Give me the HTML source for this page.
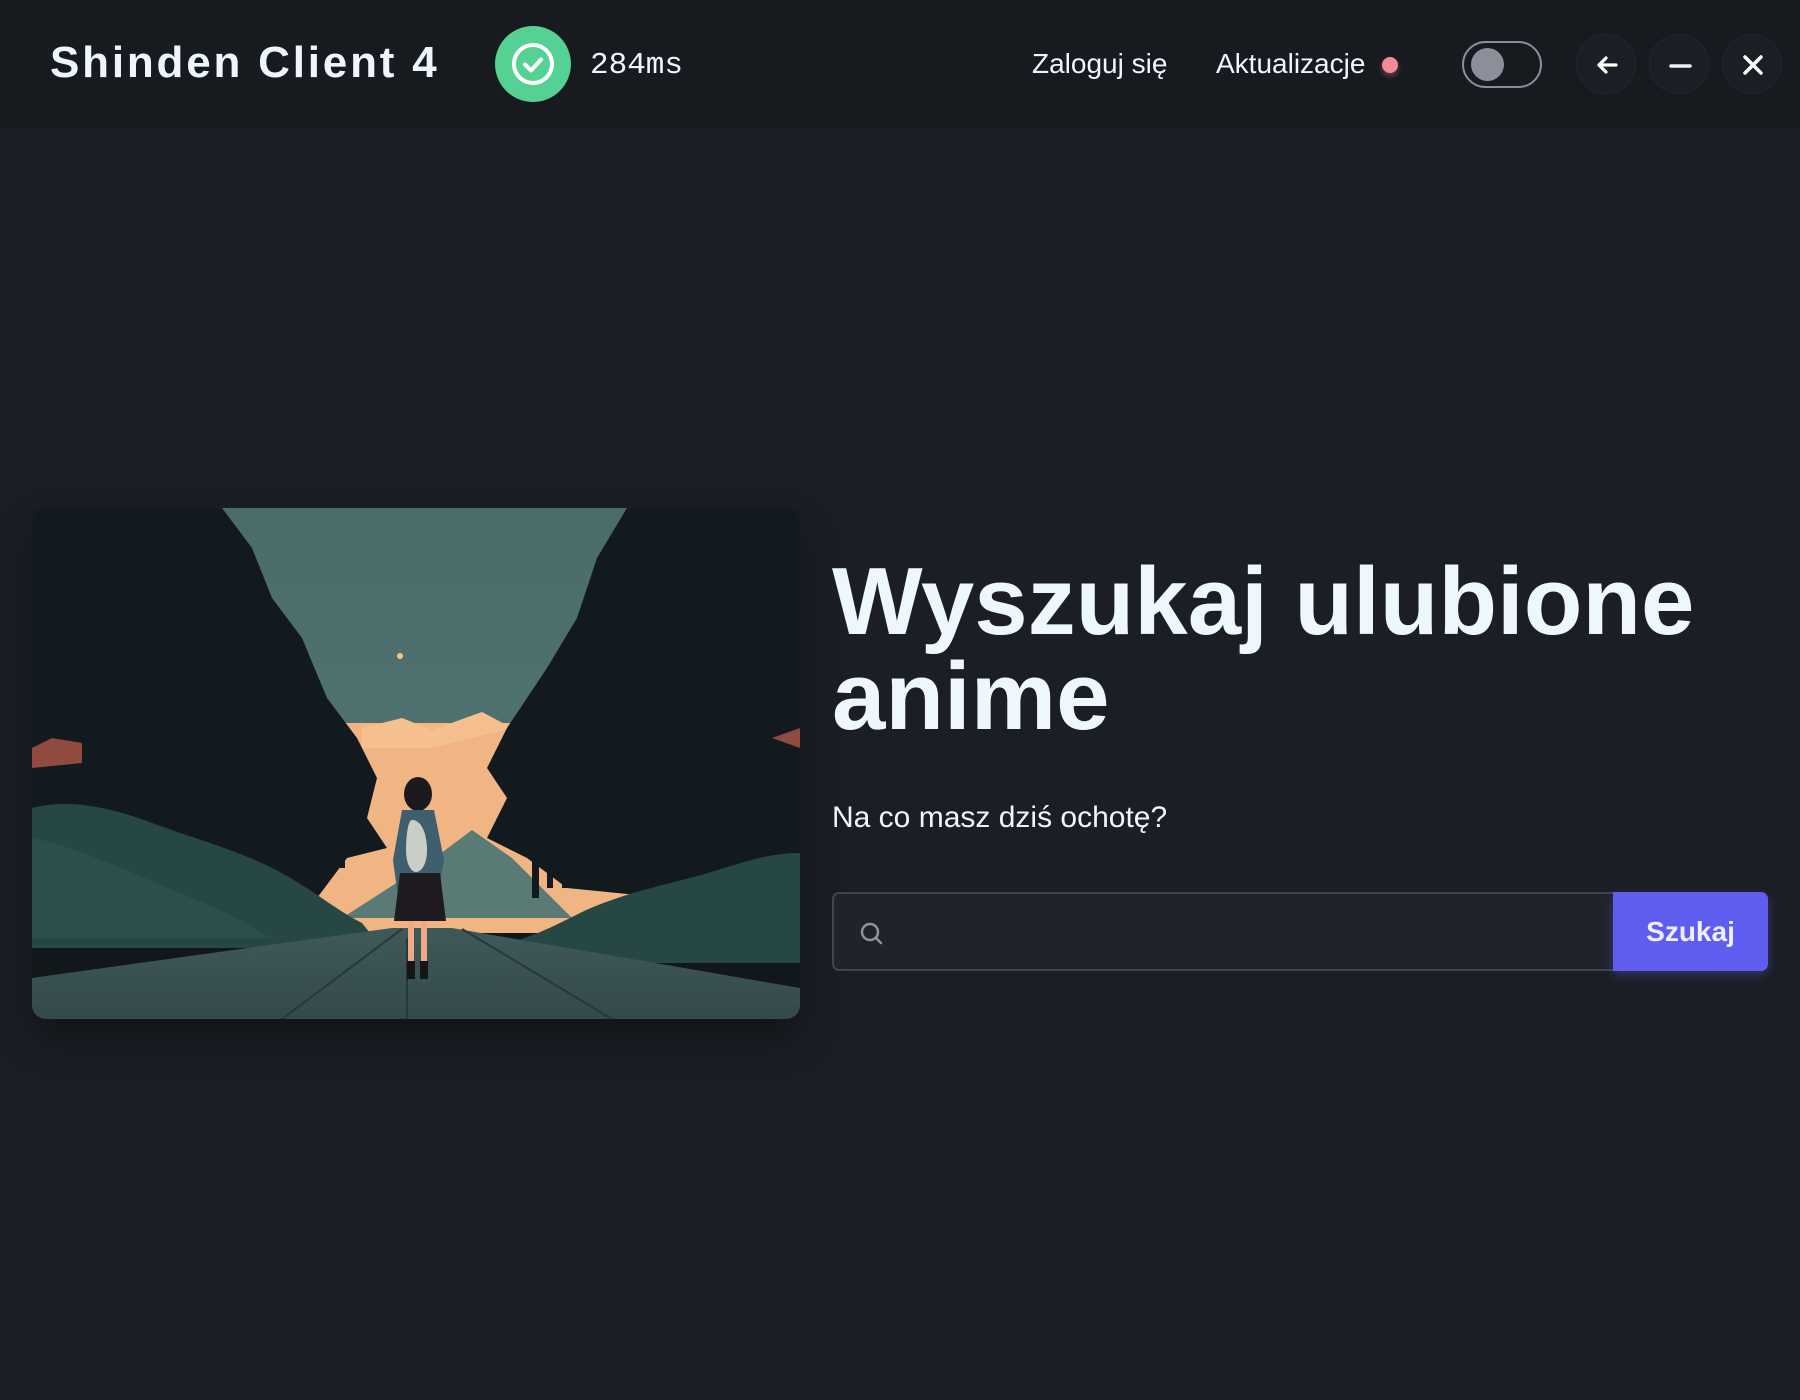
<!DOCTYPE html>
<html><head><meta charset="utf-8"><style>
*{margin:0;padding:0;box-sizing:border-box}
html,body{width:1800px;height:1400px;overflow:hidden;background:#1b1e25;font-family:"Liberation Sans",sans-serif;color:#eef6fd}
.hdr{position:absolute;left:0;top:0;width:1800px;height:128px;background:#171a1f}
.logo{position:absolute;left:50px;top:35px;font-size:44px;font-weight:bold;letter-spacing:2.8px;color:#eef6fd;line-height:56px}
.ping{position:absolute;left:495px;top:26px;width:76px;height:76px;border-radius:50%;background:#55d193}
.ms{position:absolute;left:590px;top:46px;font-family:"Liberation Mono",monospace;font-size:31px;line-height:40px}
.nav{position:absolute;top:46px;font-size:28px;line-height:36px}
.dot{position:absolute;left:1382px;top:57px;width:16px;height:16px;border-radius:50%;background:#f58a96;box-shadow:0 3px 6px rgba(245,120,140,.4)}
.tog{position:absolute;left:1462px;top:41px;width:80px;height:47px;border-radius:24px;border:2px solid #8a8e96}
.knob{position:absolute;left:7px;top:5px;width:33px;height:33px;border-radius:50%;background:#8b8f99}
.btn{position:absolute;top:34px;width:60px;height:60px;border-radius:50%;background:#1b1e25;border:1px solid #22262d}
.btn svg{position:absolute;left:0;top:0}
.card{position:absolute;left:32px;top:508px;width:768px;height:511px;border-radius:14px;overflow:hidden;box-shadow:0 20px 40px rgba(0,0,0,.35)}
h1{position:absolute;left:832px;top:554px;font-size:96px;line-height:95px;font-weight:bold;color:#eef7fd}
.sub{position:absolute;left:832px;top:800px;font-size:30px;line-height:36px}
.inp{position:absolute;left:832px;top:892px;width:782px;height:79px;border:2px solid #40444c;border-right:none;border-radius:7px 0 0 7px;background:#20232b}
.sb{position:absolute;left:1613px;top:892px;width:155px;height:79px;background:#5f5cf0;border-radius:0 7px 7px 0;font-weight:bold;font-size:28px;line-height:79px;text-align:center;color:#eef;box-shadow:0 4px 10px rgba(95,92,240,.35)}
</style></head><body>
<div class="hdr">
<div class="logo">Shinden Client 4</div>
<div class="ping"><svg width="76" height="76"><circle cx="38" cy="38" r="19" fill="none" stroke="#fff" stroke-width="4"/><path d="M30 38.5l6 6 10-11" fill="none" stroke="#fff" stroke-width="4" stroke-linecap="round" stroke-linejoin="round"/></svg></div>
<div class="ms">284ms</div>
<div class="nav" style="left:1032px">Zaloguj się</div>
<div class="nav" style="left:1216px">Aktualizacje</div>
<div class="dot"></div>
<div class="tog"><div class="knob"></div></div>
<div class="btn" style="left:1576px"><svg width="60" height="60"><path d="M39 30H22M29 23l-7 7 7 7" fill="none" stroke="#fff" stroke-width="3.2" stroke-linecap="round" stroke-linejoin="round"/></svg></div>
<div class="btn" style="left:1649px"><svg width="60" height="60"><path d="M21 31h19" stroke="#eef" stroke-width="3.5" stroke-linecap="round"/></svg></div>
<div class="btn" style="left:1722px"><svg width="60" height="60"><path d="M22 22l16 16M38 22L22 38" stroke="#fff" stroke-width="3.5" stroke-linecap="round"/></svg></div>
</div>

<div class="card"><svg width="768" height="511" viewBox="0 0 768 511">
<defs><linearGradient id="sky" x1="0" y1="0" x2="0" y2="1"><stop offset="0" stop-color="#4a6b69"/><stop offset="1" stop-color="#4f7270"/></linearGradient>
<linearGradient id="rd" x1="0" y1="0" x2="0" y2="1"><stop offset="0" stop-color="#3f5959"/><stop offset="1" stop-color="#34494b"/></linearGradient></defs>
<rect width="768" height="511" fill="#12171c"/>
<rect x="150" y="0" width="480" height="240" fill="url(#sky)"/>
<rect x="60" y="215" width="670" height="210" fill="#f1b584"/>
<path d="M330 220l40-10 30 12 50-18 30 16-80 20-70 0z" fill="#f6c08e"/>
<path d="M310 410l90-58 40-30 40 28 60 60z" fill="#5a7a76"/>
<path d="M0 0H190l30 40 20 50 30 40 25 60 30 40 20 40-10 40 20 30-40 10-30 40-80 10-60-40H0z" fill="#131a1f"/>
<path d="M80 230h8v80h-8zM100 220h6v100h-6zM120 240h6v90h-6zM160 250h5v90h-5zM240 260h5v90h-5zM262 270h5v80h-5zM308 300h5v60h-5z" fill="#131a1f"/>
<path d="M768 0H595l-30 50-20 60-30 50-40 60-20 40 20 30-20 40 40 20 40 30 100 10 133-20z" fill="#131a1f"/>
<path d="M500 280h7v110h-7zM515 290h6v90h-6zM530 300h5v80h-5zM650 240h6v100h-6zM680 250h6v90h-6zM720 230h6v90h-6z" fill="#131a1f"/>
<path d="M0 240l20-10 30 5v20l-50 5zM740 230l28-10v20z" fill="#e56a55" opacity=".6"/>
<path d="M0 300c40-10 80 0 120 15s80 25 120 45 60 40 90 55l20 25H0z" fill="#264744"/>
<path d="M768 345c-40 0-70 15-110 25s-80 20-110 35-40 20-70 30v20h290z" fill="#264744"/>
<path d="M0 330c50 10 110 40 160 60s60 30 80 40H0z" fill="#2d524e" opacity=".7"/>
<path d="M0 470l360-50h60l348 60v31H0z" fill="url(#rd)"/>
<path d="M250 511l120-90M580 511l-150-90M375 430v81" stroke="#26383b" stroke-width="2"/>
<ellipse cx="386" cy="286" rx="14" ry="17" fill="#1a1a1f"/>
<path d="M370 302h32l10 50-5 30h-42l-4-30z" fill="#3f5e6e"/>
<path d="M380 312c10 0 15 15 15 30s-6 22-11 22-10-8-10-22 2-30 6-30z" fill="#c9cfc6"/>
<path d="M368 365h40l6 48h-52z" fill="#1f1a20"/>
<rect x="376" y="413" width="6" height="40" fill="#f0a888"/><rect x="389" y="413" width="6" height="40" fill="#f0a888"/>
<rect x="375" y="453" width="8" height="18" fill="#151515"/><rect x="388" y="453" width="8" height="18" fill="#151515"/>
<circle cx="368" cy="148" r="3" fill="#f2c88a"/>
</svg></div>

<h1>Wyszukaj ulubione<br>anime</h1>
<div class="sub">Na co masz dziś ochotę?</div>
<div class="inp"><svg style="position:absolute;left:24px;top:26px" width="28" height="28"><circle cx="12" cy="12" r="8" fill="none" stroke="#8e929a" stroke-width="2.5"/><path d="M18 18l5 5" stroke="#8e929a" stroke-width="2.5" stroke-linecap="round"/></svg></div>
<div class="sb">Szukaj</div>
</body></html>
